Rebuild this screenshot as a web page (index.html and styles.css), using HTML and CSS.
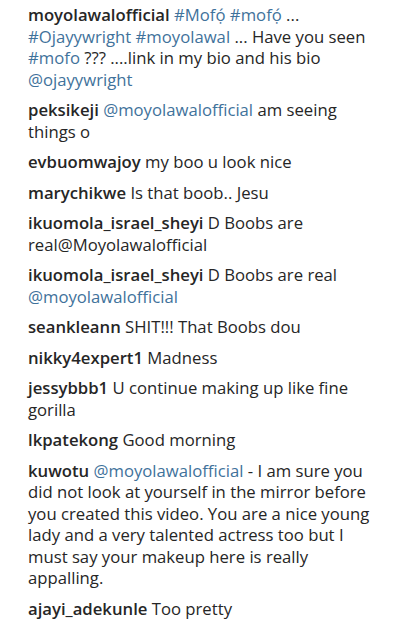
FILE: index.html
```html
<!DOCTYPE html>
<html>
<head>
<meta charset="utf-8">
<link rel="stylesheet" href="styles.css">
</head>
<body>
<ul class="comments">
  <li class="comment"><span class="user">moyolawalofficial</span> <a class="link">#Mofọ́</a> <a class="link">#mofọ́</a> ... <a class="link">#Ojayywright</a> <a class="link">#moyolawal</a> ... Have you seen <a class="link">#mofo</a> ??? ....link in my bio and his bio <a class="link">@ojayywright</a></li>
  <li class="comment"><span class="user">peksikeji</span> <a class="link">@moyolawalofficial</a> am seeing things o</li>
  <li class="comment"><span class="user">evbuomwajoy</span> my boo u look nice</li>
  <li class="comment"><span class="user">marychikwe</span> Is that boob.. Jesu</li>
  <li class="comment"><span class="user">ikuomola_israel_sheyi</span> D Boobs are real@Moyolawalofficial</li>
  <li class="comment"><span class="user">ikuomola_israel_sheyi</span> D Boobs are real <a class="link">@moyolawalofficial</a></li>
  <li class="comment"><span class="user">seankleann</span> SHIT!!! That Boobs dou</li>
  <li class="comment"><span class="user">nikky4expert1</span> Madness</li>
  <li class="comment"><span class="user">jessybbb1</span> U continue making up like fine gorilla</li>
  <li class="comment"><span class="user">lkpatekong</span> Good morning</li>
  <li class="comment"><span class="user">kuwotu</span> <a class="link">@moyolawalofficial</a> - I am sure you did not look at yourself in the mirror before you created this video. You are a nice young lady and a very talented actress too but I must say your makeup here is really appalling.</li>
  <li class="comment"><span class="user">ajayi_adekunle</span> Too pretty</li>
</ul>
</body>
</html>
```

FILE: styles.css
```css
html, body {
  margin: 0;
  padding: 0;
  background: #ffffff;
}
body {
  font-family: "Open Sans", Lato, sans-serif;
  font-size: 16.7px;
  color: #262626;
}
.comments {
  list-style: none;
  margin: 0;
  padding: 4px 28px 0 28px;
  width: 350px;
}
.comment {
  line-height: 21.5px;
  margin: 0 0 9px 0;
}
.user {
  font-weight: 600;
}
.link {
  color: #3f729b;
  text-decoration: none;
}
```
